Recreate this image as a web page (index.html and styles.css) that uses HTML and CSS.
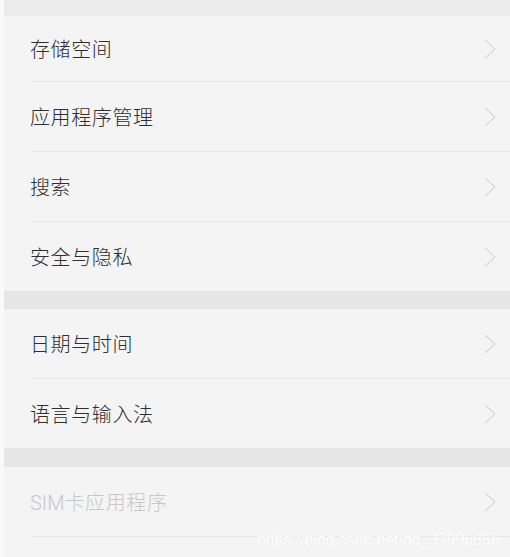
FILE: index.html
```html
<!DOCTYPE html>
<html lang="zh">
<head>
<meta charset="utf-8">
<link rel="stylesheet" href="styles.css">
</head>
<body>
<div class="screen">
  <div class="band band-top"></div>
  <div class="group">
    <div class="row first"><span class="label">存储空间</span><svg class="chev" viewBox="0 0 12 20"><path d="M1 1 L11 10 L1 19"/></svg></div>
    <div class="row"><span class="label">应用程序管理</span><svg class="chev" viewBox="0 0 12 20"><path d="M1 1 L11 10 L1 19"/></svg></div>
    <div class="row"><span class="label">搜索</span><svg class="chev" viewBox="0 0 12 20"><path d="M1 1 L11 10 L1 19"/></svg></div>
    <div class="row last"><span class="label">安全与隐私</span><svg class="chev" viewBox="0 0 12 20"><path d="M1 1 L11 10 L1 19"/></svg></div>
  </div>
  <div class="band"></div>
  <div class="group">
    <div class="row"><span class="label">日期与时间</span><svg class="chev" viewBox="0 0 12 20"><path d="M1 1 L11 10 L1 19"/></svg></div>
    <div class="row last"><span class="label">语言与输入法</span><svg class="chev" viewBox="0 0 12 20"><path d="M1 1 L11 10 L1 19"/></svg></div>
  </div>
  <div class="band band-b"></div>
  <div class="group">
    <div class="row disabled"><span class="label"><span class="latin">SIM</span>卡应用程序</span><svg class="chev" viewBox="0 0 12 20"><path d="M1 1 L11 10 L1 19"/></svg></div>
  </div>
  <div class="watermark">https://blog.csdn.net/qq_37996856</div>
</div>
</body>
</html>
```
FILE: styles.css
```css
html, body {
  margin: 0;
  padding: 0;
  background: #fafafa;
}
.screen {
  position: relative;
  margin-left: 4px;
  width: 506px;
  height: 557px;
  background: #f4f4f4;
  overflow: hidden;
  font-family: "Noto Sans CJK SC", "Noto Sans", sans-serif;
}
.band {
  height: 18px;
  background: #e6e6e6;
}
.band-top {
  height: 16px;
  background: #ececec;
}
.band-b {
  height: 19px;
}
.group {
  background: #f4f4f4;
}
.row {
  height: 69px;
  margin-left: 26px;
  display: flex;
  align-items: center;
  justify-content: space-between;
  border-bottom: 1px solid #e8e8e8;
  box-sizing: content-box;
}
.row.first {
  height: 65px;
}
.row.last {
  border-bottom: none;
}
.label {
  font-size: 20px;
  font-weight: 300;
  color: #2e2e2e;
  letter-spacing: 0.6px;
}
.latin {
  font-family: Roboto, "Noto Sans", sans-serif;
  font-weight: 300;
  letter-spacing: 0;
}
.disabled .label {
  color: #c8c8c8;
}
.chev {
  width: 12px;
  height: 20px;
  margin-right: 14px;
  fill: none;
  stroke: #c8c8c8;
  stroke-width: 1;
}
.watermark {
  position: absolute;
  left: 253px;
  top: 531px;
  font-family: "Liberation Sans", Arial, sans-serif;
  font-size: 15.8px;
  color: #ffffff;
  text-shadow: 0 0 1px #e2e2e2;
}
```
